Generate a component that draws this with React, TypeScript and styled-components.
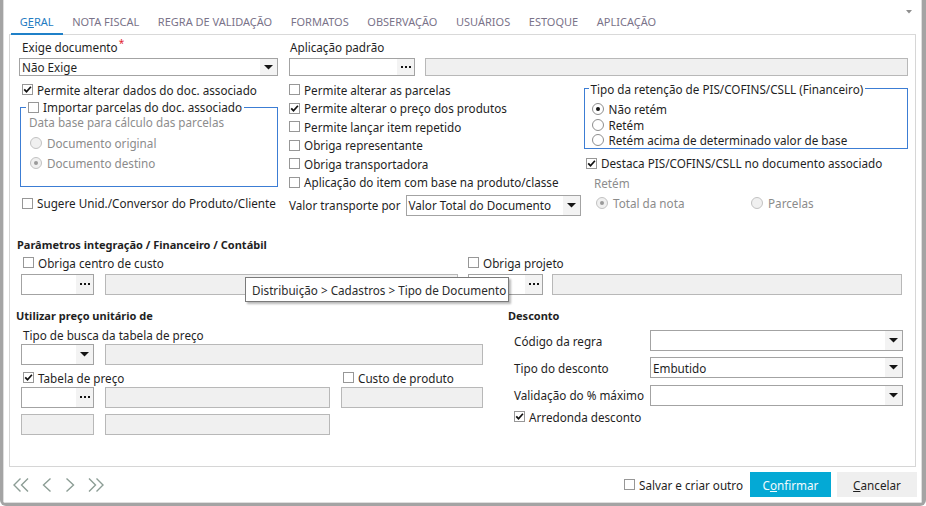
import React from 'react';
import styled, { createGlobalStyle } from 'styled-components';

const GlobalStyle = createGlobalStyle`
  * { box-sizing: border-box; }
  html, body { margin: 0; padding: 0; background: #ffffff; }
  body {
    font-family: "Segoe UI", "Noto Sans", "Open Sans", sans-serif;
    font-size: 11.7px;
    color: #1f1f1f;
  }
`;

const Window = styled.div`
  width: 926px;
  height: 506px;
  border: 0 solid #a4a4a4;
  border-width: 0 4px 3px 3px;
  border-radius: 0 0 6px 6px;
  background: #fff;
  overflow: hidden;
`;

const Frame = styled.div`
  height: 100%;
  display: flex;
  flex-direction: column;
  border: 0 solid #dedede;
  border-width: 0 1px 1px 1px;
`;

const TabBar = styled.div`
  height: 35px;
  margin: 0 5px;
  padding-left: 1.5px;
  display: flex;
  box-shadow: inset 0 -1px 0 #d9d9d9;
  flex: none;
`;

const Tab = styled.div<{ $active?: boolean }>`
  height: 35px;
  padding: 8px 9.3px 0;
  display: flex;
  align-items: center;
  font-size: 11px;
  white-space: nowrap;
  color: ${p => (p.$active ? '#1f7cc2' : '#7a7389')};
  box-shadow: ${p => (p.$active ? 'inset 0 -2px 0 #1f80c8' : 'none')};
`;

const TabMenu = styled.div`
  margin: 10px 4px 0 auto;
  height: 6px;
  display: flex;
`;

const Panel = styled.div`
  position: relative;
  flex: 1;
  margin: 0 5px;
  border: 1px solid #d6d6d6;
  border-top: none;
  padding: 4px 7px 0 9px;
`;

const TopRow = styled.div`
  display: flex;
`;

const Field = styled.div<{ $w?: number; $ml?: number }>`
  display: flex;
  flex-direction: column;
  gap: 3px;
  margin-left: ${p => p.$ml ?? 0}px;
  ${p => (p.$w ? `width: ${p.$w}px; flex: none;` : 'flex: 1;')}
`;

const FieldLabel = styled.div<{ $indent?: number; $muted?: boolean; $h?: number; $mt?: number }>`
  height: ${p => p.$h ?? 16}px;
  line-height: ${p => p.$h ?? 16}px;
  margin-top: ${p => p.$mt ?? 0}px;
  padding-left: ${p => p.$indent ?? 0}px;
  color: ${p => (p.$muted ? '#8d8d8d' : 'inherit')};
  white-space: nowrap;
`;

const Required = styled.sup`
  color: #e2232e;
  font-size: 10px;
  line-height: 0;
  margin-left: 1px;
`;

const Box = styled.div<{ $w?: number; $disabled?: boolean }>`
  height: 21px;
  border: 1px solid ${p => (p.$disabled ? '#b8b8b8' : '#a3a3a3')};
  background: ${p => (p.$disabled ? '#f0f0f0' : '#fff')};
  display: flex;
  align-items: stretch;
  ${p => (p.$w ? `width: ${p.$w}px; flex: none;` : 'flex: 1; min-width: 0;')}
`;

const BoxValue = styled.div`
  flex: 1;
  padding-left: 2px;
  display: flex;
  align-items: center;
  white-space: nowrap;
  overflow: hidden;
`;

const BoxButton = styled.div`
  width: 17px;
  background: #f3f3f3;
  display: flex;
  align-items: center;
  justify-content: center;
`;

const Columns = styled.div`
  display: flex;
  margin-top: 4.5px;
`;

const Column = styled.div<{ $w?: number; $ml?: number }>`
  display: flex;
  flex-direction: column;
  margin-left: ${p => p.$ml ?? 0}px;
  ${p => (p.$w ? `width: ${p.$w}px; flex: none;` : 'flex: 1;')}
`;

const OptionRow = styled.div<{ $h?: number; $mt?: number; $indent?: number; $w?: number; $disabled?: boolean; $radio?: boolean }>`
  display: flex;
  align-items: center;
  gap: ${p => (p.$radio ? 5 : 4)}px;
  height: ${p => p.$h ?? 18}px;
  margin-top: ${p => p.$mt ?? 0}px;
  margin-left: ${p => p.$indent ?? 0}px;
  color: ${p => (p.$disabled ? '#8b8b8b' : 'inherit')};
  white-space: nowrap;
  ${p => (p.$w ? `width: ${p.$w}px; flex: none;` : '')}
`;

const CheckMark = styled.span`
  width: 11px;
  height: 11px;
  flex: none;
  border: 1px solid #979797;
  background: #fff;
  display: flex;
  align-items: center;
  justify-content: center;
`;

const RadioMark = styled.span<{ $checked?: boolean; $disabled?: boolean }>`
  width: 12px;
  height: 12px;
  flex: none;
  border-radius: 50%;
  border: 1px solid ${p => (p.$disabled ? '#c2c2c2' : '#8e8e8e')};
  background: ${p => (p.$disabled ? '#f0f0f0' : '#fff')};
  display: flex;
  align-items: center;
  justify-content: center;
  &::after {
    content: '';
    width: 4px;
    height: 4px;
    border-radius: 50%;
    background: ${p => (p.$checked ? (p.$disabled ? '#9a9a9a' : '#151515') : 'transparent')};
  }
`;

const Group = styled.fieldset<{ $pl: number; $pb?: number; $pt?: number; $ml?: number }>`
  margin: 0 0 0 ${p => p.$ml ?? 0}px;
  padding: ${p => p.$pt ?? 0}px 0 ${p => p.$pb ?? 0}px ${p => p.$pl}px;
  border: 1px solid #3c7dd4;
  min-width: 0;
`;

const GroupTitle = styled.legend`
  padding: 0 2px;
  height: 16px;
  line-height: 16px;
  display: flex;
  align-items: center;
  white-space: nowrap;
`;

const GroupBody = styled.div<{ $indent: number }>`
  display: flex;
  flex-direction: column;
  padding-left: ${p => p.$indent}px;
`;

const Line = styled.div<{ $mt?: number; $gap?: number; $top?: boolean }>`
  display: flex;
  align-items: ${p => (p.$top ? 'flex-start' : 'center')};
  margin-top: ${p => p.$mt ?? 0}px;
  gap: ${p => p.$gap ?? 11}px;
`;

const Section = styled.div<{ $mt: number }>`
  margin-top: ${p => p.$mt}px;
  padding-left: 2px;
`;

const SectionTitle = styled.div<{ $indent?: number }>`
  height: 16px;
  line-height: 16px;
  font-weight: 700;
  font-size: 11px;
  margin-left: ${p => p.$indent ?? 0}px;
  white-space: nowrap;
`;

const Half = styled.div<{ $w: number; $ml?: number }>`
  width: ${p => p.$w}px;
  margin-left: ${p => p.$ml ?? 0}px;
  flex: none;
`;

const DiscountGrid = styled.div`
  display: grid;
  grid-template-columns: 136px 253px;
  row-gap: 6.3px;
  align-items: center;
  margin-top: 6px;
  padding-left: 6px;
`;

const Tooltip = styled.div`
  position: absolute;
  left: 235px;
  top: 242px;
  width: 264px;
  height: 25px;
  padding-left: 6px;
  display: flex;
  align-items: center;
  border: 1px solid #7a7a7a;
  background: #fff;
  color: #2b2b2b;
  box-shadow: 2px 2px 2px rgba(0, 0, 0, 0.28);
  white-space: nowrap;
`;

const Footer = styled.div`
  height: 35px;
  flex: none;
  display: flex;
  align-items: center;
  padding: 0 4px 0 9px;
`;

const Nav = styled.div`
  display: flex;
  align-items: center;
  gap: 13px;
  color: #8c9d95;
`;

const FooterActions = styled.div`
  margin-left: auto;
  display: flex;
  align-items: center;
  gap: 7px;
`;

const Buttons = styled.div`
  display: flex;
  gap: 6px;
`;

const Button = styled.button<{ $primary?: boolean }>`
  width: ${p => (p.$primary ? 81 : 80)}px;
  height: 25px;
  border: none;
  padding: 0;
  font: inherit;
  background: ${p => (p.$primary ? '#04a9d5' : '#efefef')};
  color: ${p => (p.$primary ? '#f2fbfe' : '#1f1f1f')};
`;

const CheckIcon = () => (
  <svg width="9" height="9" viewBox="0 0 9 9">
    <path d="M1.2 4.3 L3.5 6.7 L7.9 1.7" fill="none" stroke="#121212" strokeWidth="1.7" />
  </svg>
);

const Arrow = () => (
  <svg width="9" height="5" viewBox="0 0 9 5">
    <path d="M0 0H9L4.5 4.6Z" fill="#151515" />
  </svg>
);

const Dots = () => (
  <svg width="10" height="2" viewBox="0 0 10 2">
    <rect x="0" width="2" height="2" fill="#151515" />
    <rect x="4" width="2" height="2" fill="#151515" />
    <rect x="8" width="2" height="2" fill="#151515" />
  </svg>
);

type OptionProps = {
  label: string;
  checked?: boolean;
  radio?: boolean;
  disabled?: boolean;
  h?: number;
  mt?: number;
  indent?: number;
  w?: number;
};

const Option = ({ label, checked, radio, disabled, h, mt, indent, w }: OptionProps) => (
  <OptionRow $h={h} $mt={mt} $indent={indent} $w={w} $disabled={disabled} $radio={radio}>
    {radio ? (
      <RadioMark $checked={checked} $disabled={disabled} />
    ) : (
      <CheckMark>{checked && <CheckIcon />}</CheckMark>
    )}
    <span>{label}</span>
  </OptionRow>
);

const Select = ({ value, w }: { value?: string; w?: number }) => (
  <Box $w={w}>
    <BoxValue>{value}</BoxValue>
    <BoxButton>
      <Arrow />
    </BoxButton>
  </Box>
);

const Lookup = ({ w }: { w?: number }) => (
  <Box $w={w}>
    <BoxValue />
    <BoxButton>
      <Dots />
    </BoxButton>
  </Box>
);

const Chevron = ({ dir, double }: { dir: 'left' | 'right'; double?: boolean }) => {
  const w = double ? 16 : 10;
  const one = dir === 'left' ? 'M8.5 1.5 L1.5 8 L8.5 14.5' : 'M1.5 1.5 L8.5 8 L1.5 14.5';
  const two =
    dir === 'left'
      ? 'M7.5 1.5 L1 8 L7.5 14.5 M15 1.5 L8.5 8 L15 14.5'
      : 'M1 1.5 L7.5 8 L1 14.5 M8.5 1.5 L15 8 L8.5 14.5';
  return (
    <svg width={w} height="16" viewBox={`0 0 ${w} 16`}>
      <path d={double ? two : one} fill="none" stroke="currentColor" strokeWidth="1.4" />
    </svg>
  );
};

const tabs = ['GERAL', 'NOTA FISCAL', 'REGRA DE VALIDAÇÃO', 'FORMATOS', 'OBSERVAÇÃO', 'USUÁRIOS', 'ESTOQUE', 'APLICAÇÃO'];

const middleOptions: { label: string; checked?: boolean }[] = [
  { label: 'Permite alterar as parcelas' },
  { label: 'Permite alterar o preço dos produtos', checked: true },
  { label: 'Permite lançar item repetido' },
  { label: 'Obriga representante' },
  { label: 'Obriga transportadora' },
  { label: 'Aplicação do item com base na produto/classe' },
];

export default function App() {
  return (
    <>
      <GlobalStyle />
      <Window>
        <Frame>
          <TabBar>
            {tabs.map((t, i) => (
              <Tab key={t} $active={i === 0}>
                {i === 0 ? (
                  <span>
                    G<u>E</u>RAL
                  </span>
                ) : (
                  t
                )}
              </Tab>
            ))}
            <TabMenu>
              <svg width="6" height="4" viewBox="0 0 6 4">
                <path d="M0 0H6L3 3.5Z" fill="#8e8e8e" />
              </svg>
            </TabMenu>
          </TabBar>

          <Panel>
            <TopRow>
              <Field $w={259}>
                <FieldLabel $indent={3}>
                  Exige documento<Required>*</Required>
                </FieldLabel>
                <Select value="Não Exige" />
              </Field>
              <Field $w={126} $ml={11}>
                <FieldLabel $indent={1}>Aplicação padrão</FieldLabel>
                <Lookup />
              </Field>
              <Field $ml={10}>
                <FieldLabel />
                <Box $disabled />
              </Field>
            </TopRow>

            <Columns>
              <Column $w={259}>
                <Option checked indent={3} h={18.5} label="Permite alterar dados do doc. associado" />
                <Group $pl={5} $pb={13} $ml={1}>
                  <GroupTitle>
                    <Option h={16} label="Importar parcelas do doc. associado" />
                  </GroupTitle>
                  <GroupBody $indent={3}>
                    <FieldLabel $muted $h={14}>
                      Data base para cálculo das parcelas
                    </FieldLabel>
                    <Option radio disabled h={20} mt={4} indent={1} label="Documento original" />
                    <Option radio disabled checked h={20} indent={1} label="Documento destino" />
                  </GroupBody>
                </Group>
                <Option mt={7} indent={3} label="Sugere Unid./Conversor do Produto/Cliente" />
              </Column>

              <Column $w={295} $ml={11}>
                {middleOptions.map(o => (
                  <Option key={o.label} h={18.5} checked={o.checked} label={o.label} />
                ))}
                <Line $mt={3} $gap={5}>
                  <span>Valor transporte por</span>
                  <Select w={175} value="Valor Total do Documento" />
                </Line>
              </Column>

              <Column>
                <Group $pl={3.5} $pt={5}>
                  <GroupTitle>Tipo da retenção de PIS/COFINS/CSLL (Financeiro)</GroupTitle>
                  <GroupBody $indent={3}>
                    <Option radio checked h={15.5} label="Não retém" />
                    <Option radio h={15.5} label="Retém" />
                    <Option radio h={15.5} label="Retém acima de determinado valor de base" />
                  </GroupBody>
                </Group>
                <Option checked mt={5} indent={2} label="Destaca PIS/COFINS/CSLL no documento associado" />
                <FieldLabel $muted $indent={10} $mt={3}>
                  Retém
                </FieldLabel>
                <Line $mt={3} $gap={0}>
                  <Option radio disabled checked indent={12} w={155} label="Total da nota" />
                  <Option radio disabled label="Parcelas" />
                </Line>
              </Column>
            </Columns>

            <Section $mt={21}>
              <SectionTitle $indent={-4}>Parâmetros integração / Financeiro / Contábil</SectionTitle>
              <Line $gap={0}>
                <Half $w={437}>
                  <Option mt={1} indent={2} label="Obriga centro de custo" />
                  <Line $mt={2}>
                    <Lookup w={73} />
                    <Box $disabled />
                  </Line>
                </Half>
                <Half $w={434} $ml={10}>
                  <Option mt={1} label="Obriga projeto" />
                  <Line $mt={2} $gap={9}>
                    <Lookup w={75} />
                    <Box $disabled />
                  </Line>
                </Half>
              </Line>
            </Section>

            <Section $mt={13.5}>
              <Line $gap={0} $top>
                <Half $w={462}>
                  <SectionTitle $indent={-5}>Utilizar preço unitário de</SectionTitle>
                  <FieldLabel $indent={2} $mt={3}>
                    Tipo de busca da tabela de preço
                  </FieldLabel>
                  <Line $mt={1}>
                    <Select w={73} />
                    <Box $disabled />
                  </Line>
                  <Line $mt={3.5} $gap={0}>
                    <Option checked indent={2} w={320} label="Tabela de preço" />
                    <Option label="Custo de produto" />
                  </Line>
                  <Line>
                    <Lookup w={73} />
                    <Box $disabled $w={225} />
                    <Box $disabled />
                  </Line>
                  <Line $mt={6}>
                    <Box $disabled $w={73} />
                    <Box $disabled $w={225} />
                  </Line>
                </Half>
                <Half $w={395} $ml={25}>
                  <SectionTitle>Desconto</SectionTitle>
                  <DiscountGrid>
                    <span>Código da regra</span>
                    <Select />
                    <span>Tipo do desconto</span>
                    <Select value="Embutido" />
                    <span>Validação do % máximo</span>
                    <Select />
                  </DiscountGrid>
                  <Option checked mt={2.4} indent={6} label="Arredonda desconto" />
                </Half>
              </Line>
            </Section>

            <Tooltip>Distribuição &gt; Cadastros &gt; Tipo de Documento</Tooltip>
          </Panel>

          <Footer>
            <Nav>
              <Chevron dir="left" double />
              <Chevron dir="left" />
              <Chevron dir="right" />
              <Chevron dir="right" double />
            </Nav>
            <FooterActions>
              <Option label="Salvar e criar outro" />
              <Buttons>
                <Button $primary>
                  C<u>o</u>nfirmar
                </Button>
                <Button>
                  <u>C</u>ancelar
                </Button>
              </Buttons>
            </FooterActions>
          </Footer>
        </Frame>
      </Window>
    </>
  );
}
